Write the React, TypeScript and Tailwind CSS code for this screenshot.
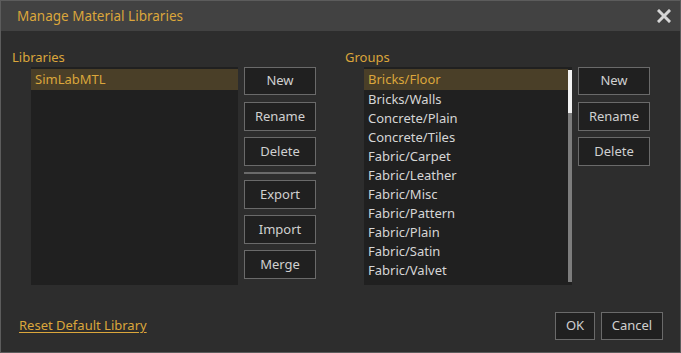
import React from "react";

const groups = [
  "Bricks/Floor",
  "Bricks/Walls",
  "Concrete/Plain",
  "Concrete/Tiles",
  "Fabric/Carpet",
  "Fabric/Leather",
  "Fabric/Misc",
  "Fabric/Pattern",
  "Fabric/Plain",
  "Fabric/Satin",
  "Fabric/Valvet",
];

function Btn({ label, size = "w-[72px] h-[29px]" }: { label: string; size?: string }) {
  return (
    <button
      className={`${size} border border-[#6a6a6a] bg-[#202020] text-[13px] text-[#d0d0d0] flex items-center justify-center`}
    >
      {label}
    </button>
  );
}

export default function App() {
  return (
    <div
      className="w-[681px] h-[353px] bg-[#2d2d2d] border border-[#5c5c5c] flex flex-col"
      style={{ fontFamily: '"Noto Sans", "Open Sans", sans-serif' }}
    >
      {/* Title bar */}
      <div className="h-[30px] bg-[#424242] flex items-center justify-between pl-[16px] pr-[8px]">
        <span className="text-[13.5px] text-[#dba63b]">Manage Material Libraries</span>
        <svg width="14" height="14" viewBox="0 0 14 14" className="mr-[1px]">
          <path d="M2 2 L12 12 M12 2 L2 12" stroke="#d6d6d6" strokeWidth="3" strokeLinecap="square" />
        </svg>
      </div>

      {/* Body */}
      <div className="flex-1 flex flex-col px-[11px] pt-[18px]">
        <div className="flex">
          {/* Libraries */}
          <div className="flex flex-col w-[305px]">
            <div className="h-[18px] text-[13px] leading-[16px] text-[#dba63b]">Libraries</div>
            <div className="flex gap-[6px] pl-[19px]">
              <div className="w-[207px] h-[218px] bg-[#202020] pt-[2px]">
                <div className="h-[21px] bg-[#4a3f28] pl-[4px] flex items-center text-[13px] text-[#dba63b]">
                  SimLabMTL
                </div>
              </div>
              <div className="flex flex-col gap-[6px]">
                <Btn label="New" size="w-[72px] h-[28px] mb-[1px]" />
                <Btn label="Rename" />
                <Btn label="Delete" />
                <div className="h-[2px] bg-[#6a6a6a]" />
                <Btn label="Export" />
                <Btn label="Import" />
                <Btn label="Merge" />
              </div>
            </div>
          </div>

          {/* Groups */}
          <div className="flex flex-col ml-[28px]">
            <div className="h-[18px] text-[13px] leading-[16px] text-[#dba63b]">Groups</div>
            <div className="flex gap-[6px] pl-[19px]">
              <div className="w-[208px] h-[218px] bg-[#202020] flex">
                <div className="flex-1 pt-[2px] flex flex-col">
                  {groups.map((g, i) => (
                    <div
                      key={g}
                      className={`${i === 0 ? "h-[21px] bg-[#4a3f28] text-[#dba63b]" : "h-[19px] text-[#d6d6d6]"} pl-[4px] flex items-center text-[13px] whitespace-nowrap`}
                    >
                      {g}
                    </div>
                  ))}
                </div>
                <div className="w-[4px] flex flex-col pt-[3px] pb-[3px]">
                  <div className="h-[43px] bg-[#f2f2f2]" />
                  <div className="flex-1 bg-[#7d7d7d]" />
                </div>
              </div>
              <div className="flex flex-col gap-[6px]">
                <Btn label="New" size="w-[72px] h-[28px] mb-[1px]" />
                <Btn label="Rename" />
                <Btn label="Delete" />
              </div>
            </div>
          </div>
        </div>

        {/* Footer */}
        <div className="flex items-center justify-between mt-[27px] pl-[7px] pr-[6px]">
          <span className="text-[13px] text-[#dba63b] underline underline-offset-2">Reset Default Library</span>
          <div className="flex gap-[6px]">
            <Btn label="OK" size="w-[40px] h-[28px]" />
            <Btn label="Cancel" size="w-[62px] h-[28px]" />
          </div>
        </div>
      </div>
    </div>
  );
}
